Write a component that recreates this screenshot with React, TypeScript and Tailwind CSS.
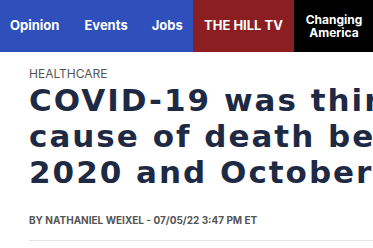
import React from "react";

export default function App() {
  return (
    <div className="w-[373px] h-[248px] overflow-hidden bg-white" style={{ fontFamily: "Inter, 'Liberation Sans', sans-serif" }}>
      <nav className="flex h-[52px] w-[600px] text-white font-bold">
        <div className="flex h-full w-[193px] items-center bg-[#2f4fba] text-[13px]">
          <span className="ml-[10px]">Opinion</span>
          <span className="ml-[25px]">Events</span>
          <span className="ml-[24px]">Jobs</span>
        </div>
        <div className="flex h-full w-[101px] items-center justify-center bg-[#8b1e21] text-[13px]">
          THE HILL TV
        </div>
        <div className="flex h-full w-[80px] flex-col items-center justify-center bg-black text-[12px] leading-[13px]">
          <span>Changing</span>
          <span>America</span>
        </div>
        <div className="h-full flex-1 bg-black" />
      </nav>
      <div className="pl-[29px] pt-[14px]">
        <div className="text-[12px] leading-[16px] text-[#555]">HEALTHCARE</div>
        <h1
          className="mt-0 whitespace-nowrap text-[31px] font-bold leading-[36px] tracking-[2px] text-[#1e2a44]"
          style={{ fontFamily: "'DejaVu Sans', Inter, sans-serif" }}
        >
          COVID-19 was third leading
          <br />
          cause of death between March
          <br />
          2020 and October 2021
        </h1>
        <div className="mt-[23px] text-[10px] font-bold leading-[14px] text-[#555]">
          BY NATHANIEL WEIXEL - 07/05/22 3:47 PM ET
        </div>
        <div className="mt-[13px] h-px w-[600px] bg-[#e5e5e5]" />
      </div>
    </div>
  );
}
